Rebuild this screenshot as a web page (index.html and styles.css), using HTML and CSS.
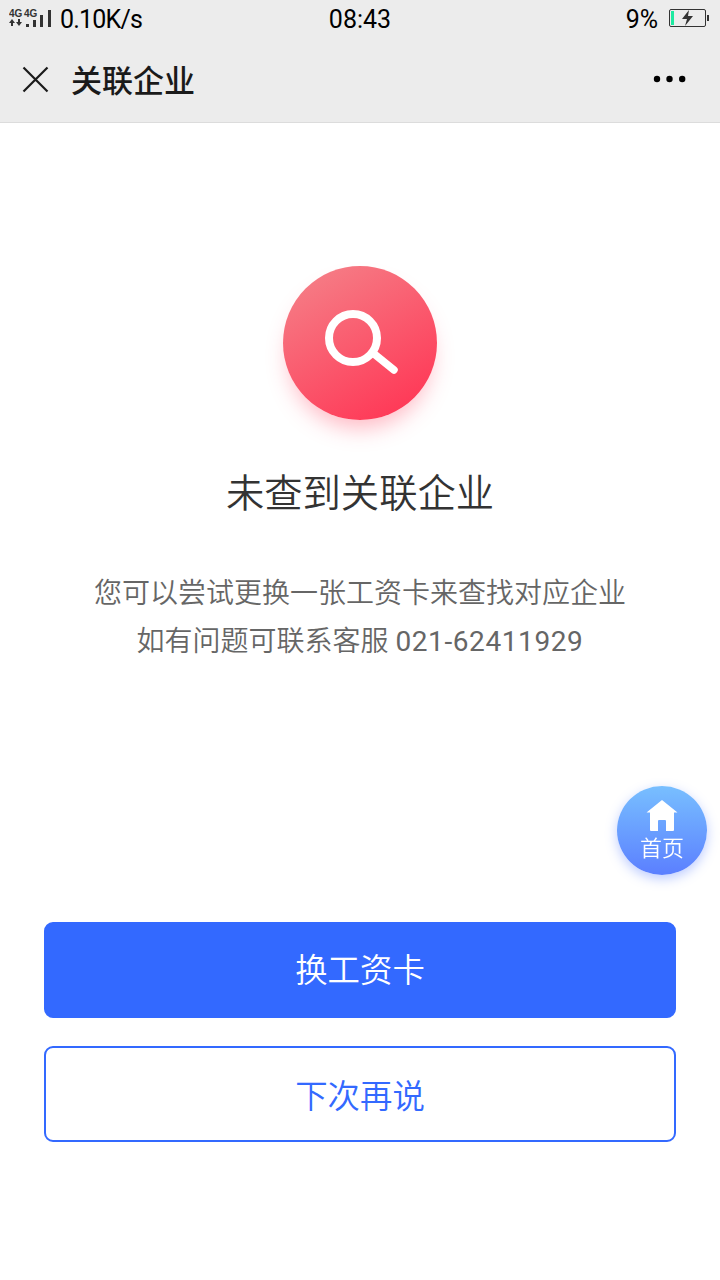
FILE: index.html
```html
<!DOCTYPE html>
<html lang="zh-CN">
<head>
    <meta charset="UTF-8">
    <meta name="viewport" content="width=device-width, initial-scale=1.0">
    <title>关联企业</title>
    <link rel="stylesheet" href="styles.css">
</head>
<body>

    <header class="header">
        <div class="status-bar">
            <div class="status-left">
                <svg class="signal" width="43" height="20" viewBox="0 0 43 20">
                    <text class="network" y="7.500"><tspan x="0">4G</tspan><tspan x="15">4G</tspan></text>
                    <path d="M2 17v-3H0l3-4 3 4H4v3zM9 10v3H7l3 4 3-4h-2v-3z" fill="#333"/>
                    <path d="M17 15h3v3h-3zM24 11h3v7h-3zM31 6h3v12h-3zM39 1h3v17h-3z" fill="#333"/>
                </svg>
                <span class="speed">0.10K/s</span>
            </div>
            <span class="time">08:43</span>
            <div class="status-right">
                <span class="percent">9%</span>
                <svg class="battery" width="40" height="18" viewBox="0 0 40 18">
                    <rect x="0.500" y="0.500" width="36" height="17" rx="1.500" fill="none" stroke="#333"/>
                    <path d="M2 2h3v14H2z" fill="#1de9a0"/>
                    <path d="M20 1l-7 9h5l-2 7 8-10h-5z" fill="#333"/>
                    <path d="M38 6h2v6h-2z" fill="#333"/>
                </svg>
            </div>
        </div>
        <nav class="nav-bar">
            <svg class="close-icon" width="28" height="28" viewBox="0 0 28 28">
                <path d="M1.500 2.500l24 24M25.500 2.500l-24 24" stroke="#1a1a1a" stroke-width="2.200"/>
            </svg>
            <h1 class="nav-title">关联企业</h1>
            <svg class="more-icon" width="34" height="8" viewBox="0 0 34 8">
                <circle cx="4" cy="4" r="3.200"/>
                <circle cx="16.500" cy="4" r="3.200"/>
                <circle cx="29.200" cy="4" r="3.200"/>
            </svg>
        </nav>
    </header>

    <main class="result">
        <div class="result-icon">
            <svg width="154" height="154" viewBox="0 0 154 154">
                <circle cx="70" cy="72" r="24" fill="none" stroke="#fff" stroke-width="8"/>
                <path d="M90 87l21 17" stroke="#fff" stroke-width="7.500" stroke-linecap="round"/>
            </svg>
        </div>
        <h2 class="result-title">未查到关联企业</h2>
        <p class="result-desc">您可以尝试更换一张工资卡来查找对应企业<br>如有问题可联系客服 <span class="phone">021-62411929</span></p>
        <div class="actions">
            <button class="btn btn-primary">换工资卡</button>
            <button class="btn btn-outline">下次再说</button>
        </div>
    </main>

    <!-- Floating home button -->
    <a class="home-btn">
        <svg width="32" height="32" viewBox="0 0 32 32">
            <path d="M16 0L0.500 12.500H4V30q0 1 1 1h7V21q0-1 1-1h6q1 0 1 1v10h7q1 0 1-1V12.500h3.500z" fill="#fff"/>
        </svg>
        <span>首页</span>
    </a>

</body>
</html>
```
FILE: styles.css
```css
* {
    box-sizing: border-box;
}

body {
    margin: 0;
    background-color: #fff;
    font-family: Roboto, "Noto Sans CJK SC", sans-serif;
    font-weight: 350;
}

.header {
    height: 123px;
    background-color: #ececec;
    border-bottom: 1px solid #dcdcdc;
}

/* Status bar */
.status-bar {
    display: grid;
    grid-template-columns: 1fr auto 1fr;
    align-items: center;
    height: 37px;
    padding: 0 11px 0 9px;
    font-size: 25px;
    font-weight: 400;
    color: #000;
}

.status-left,
.status-right {
    display: flex;
    align-items: center;
}

.status-left {
    gap: 8px;
}

.status-right {
    justify-content: flex-end;
    gap: 11px;
}

.network {
    font-family: "Liberation Sans", Arial, sans-serif;
    font-size: 10px;
    font-weight: bold;
    fill: #333;
}

.speed {
    padding-top: 1px;
    letter-spacing: -0.8px;
}

.time {
    padding: 2px 0 0 2px;
}

.percent {
    padding-top: 1px;
}

.battery {
    margin-bottom: 1px;
}

/* Nav bar */
.nav-bar {
    display: flex;
    align-items: center;
    height: 84px;
    padding: 0 33px 0 22px;
}

.nav-title {
    margin: 0 auto 0 21px;
    padding-top: 5px;
    font-size: 31px;
    font-weight: 500;
    line-height: 40px;
    color: #1a1a1a;
}

/* Result */
.result {
    display: flex;
    flex-direction: column;
    align-items: center;
    padding: 143px 44px 0;
}

.result-icon {
    width: 154px;
    height: 154px;
    border-radius: 50%;
    background: linear-gradient(150deg, #f58088 5%, #ff3655 92%);
    box-shadow: 0 14px 22px -6px rgba(255, 54, 85, 0.35);
}

.result-title {
    margin: 47px 0 0;
    font-size: 38.3px;
    font-weight: 350;
    line-height: 54px;
    color: #333;
}

.result-desc {
    margin: 49px 0 0;
    font-size: 28px;
    line-height: 48px;
    text-align: center;
    color: #666;
}

.phone {
    font-weight: 400;
    letter-spacing: 0.6px;
}

.actions {
    display: flex;
    flex-direction: column;
    gap: 28px;
    width: 100%;
    margin-top: 256px;
}

.btn {
    height: 96px;
    padding: 0 0 2px;
    border: 2px solid #3369ff;
    border-radius: 9px;
    font-family: inherit;
    font-size: 32.4px;
    font-weight: 350;
}

.btn-primary {
    padding-bottom: 6px;
    background-color: #3369ff;
    color: #fff;
}

.btn-outline {
    background-color: #fff;
    color: #3369ff;
}

.home-btn {
    position: fixed;
    top: 786px;
    right: 13px;
    display: flex;
    flex-direction: column;
    align-items: center;
    width: 90px;
    height: 89px;
    padding-top: 14px;
    border-radius: 50%;
    background: linear-gradient(#78bfff, #5b7fff);
    box-shadow: 0 4px 12px rgba(91, 127, 255, 0.4);
    font-size: 22px;
    line-height: 33px;
    color: #fff;
}
```
